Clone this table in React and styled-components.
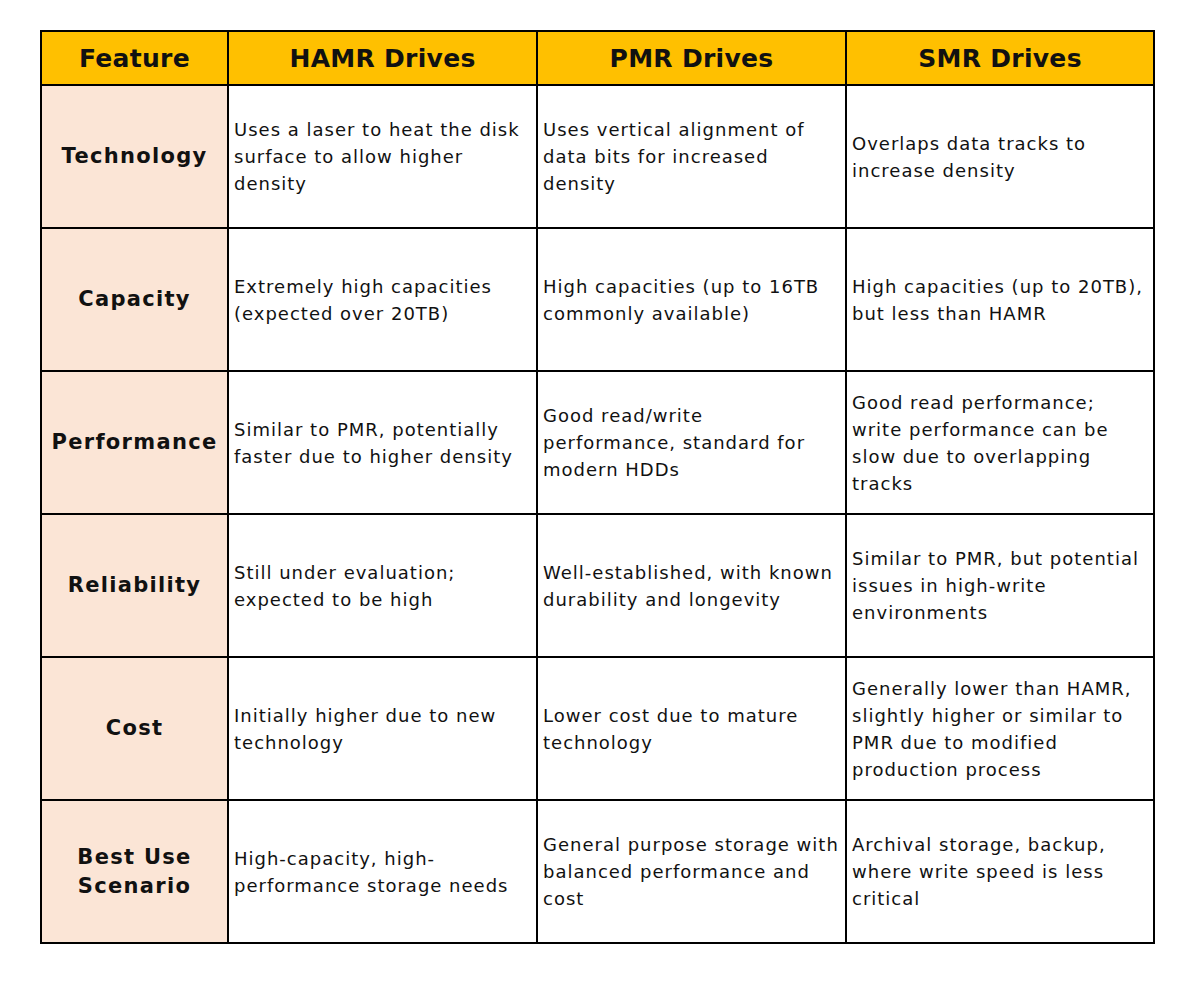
import React from "react";
import styled, { createGlobalStyle } from "styled-components";

const GlobalStyle = createGlobalStyle`
  body {
    margin: 0;
    background: #ffffff;
    font-family: "DejaVu Sans", Verdana, sans-serif;
    color: #111111;
  }
`;

const Page = styled.div`
  padding: 30px 0 0 40px;
`;

const Table = styled.table`
  border-collapse: collapse;
  table-layout: fixed;
  width: 1113px;
  border: 2px solid #000;
`;

const HeadCell = styled.th`
  background: #ffc000;
  border: 2px solid #000;
  height: 52px;
  padding: 0;
  font-size: 25px;
  font-weight: bold;
  letter-spacing: 0.3px;
  text-align: center;
  vertical-align: middle;
`;

const FeatureCell = styled.td`
  background: #fbe5d6;
  border: 2px solid #000;
  height: 141px;
  padding: 0 2px;
  font-size: 21px;
  font-weight: bold;
  letter-spacing: 1.3px;
  text-align: center;
  vertical-align: middle;
  line-height: 29px;
`;

const Cell = styled.td`
  border: 2px solid #000;
  height: 141px;
  padding: 0 3px 0 5px;
  font-size: 18px;
  line-height: 27px;
  letter-spacing: 1px;
  text-align: left;
  vertical-align: middle;
`;

const columns = ["Feature", "HAMR Drives", "PMR Drives", "SMR Drives"];
const widths = [187, 309, 309, 308];

const rows = [
  {
    feature: "Technology",
    cells: [
      "Uses a laser to heat the disk surface to allow higher density",
      "Uses vertical alignment of data bits for increased density",
      "Overlaps data tracks to increase density",
    ],
  },
  {
    feature: "Capacity",
    cells: [
      "Extremely high capacities (expected over 20TB)",
      "High capacities (up to 16TB commonly available)",
      "High capacities (up to 20TB), but less than HAMR",
    ],
  },
  {
    feature: "Performance",
    cells: [
      "Similar to PMR, potentially faster due to higher density",
      "Good read/write performance, standard for modern HDDs",
      <>
        Good read performance;
        <br />
        write performance can be slow due to overlapping tracks
      </>,
    ],
  },
  {
    feature: "Reliability",
    cells: [
      "Still under evaluation; expected to be high",
      "Well-established, with known durability and longevity",
      "Similar to PMR, but potential issues in high-write environments",
    ],
  },
  {
    feature: "Cost",
    cells: [
      "Initially higher due to new technology",
      "Lower cost due to mature technology",
      "Generally lower than HAMR, slightly higher or similar to PMR due to modified production process",
    ],
  },
  {
    feature: (
      <>
        Best Use
        <br />
        Scenario
      </>
    ),
    cells: [
      "High-capacity, high-performance storage needs",
      "General purpose storage with balanced performance and cost",
      "Archival storage, backup, where write speed is less critical",
    ],
  },
];

export default function App() {
  return (
    <Page>
      <GlobalStyle />
      <Table>
        <colgroup>
          {widths.map((w, i) => (
            <col key={i} style={{ width: w }} />
          ))}
        </colgroup>
        <thead>
          <tr>
            {columns.map((c) => (
              <HeadCell key={c}>{c}</HeadCell>
            ))}
          </tr>
        </thead>
        <tbody>
          {rows.map((row, i) => (
            <tr key={i}>
              <FeatureCell>{row.feature}</FeatureCell>
              {row.cells.map((text, j) => (
                <Cell key={j}>{text}</Cell>
              ))}
            </tr>
          ))}
        </tbody>
      </Table>
    </Page>
  );
}
